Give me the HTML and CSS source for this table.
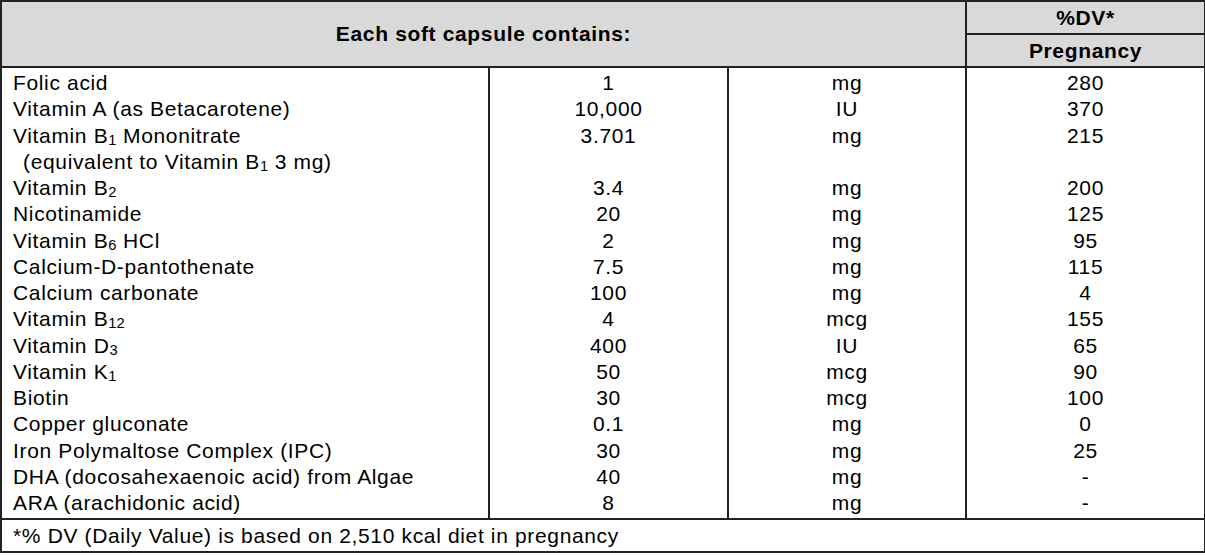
FILE: index.html
```html
<!DOCTYPE html>
<html>
<head>
<meta charset="utf-8">
<link rel="stylesheet" href="styles.css">
</head>
<body>
<table class="facts">
  <colgroup>
    <col class="c-name">
    <col class="c-amt">
    <col class="c-unit">
    <col class="c-dv">
  </colgroup>
  <thead>
    <tr class="hrow1">
      <th colspan="3" rowspan="2" class="h-main">Each soft capsule contains:</th>
      <th class="h-dv">%DV*</th>
    </tr>
    <tr class="hrow2">
      <th class="h-preg">Pregnancy</th>
    </tr>
  </thead>
  <tbody>
    <tr class="first">
      <td class="name">Folic acid</td>
      <td>1</td>
      <td>mg</td>
      <td>280</td>
    </tr>
    <tr>
      <td class="name">Vitamin A (as Betacarotene)</td>
      <td>10,000</td>
      <td>IU</td>
      <td>370</td>
    </tr>
    <tr>
      <td class="name">Vitamin B<span class="sub">1</span> Mononitrate<br><span class="indent">(equivalent to Vitamin B<span class="sub">1</span> 3 mg)</span></td>
      <td>3.701</td>
      <td>mg</td>
      <td>215</td>
    </tr>
    <tr>
      <td class="name">Vitamin B<span class="sub">2</span></td>
      <td>3.4</td>
      <td>mg</td>
      <td>200</td>
    </tr>
    <tr>
      <td class="name">Nicotinamide</td>
      <td>20</td>
      <td>mg</td>
      <td>125</td>
    </tr>
    <tr>
      <td class="name">Vitamin B<span class="sub">6</span> HCl</td>
      <td>2</td>
      <td>mg</td>
      <td>95</td>
    </tr>
    <tr>
      <td class="name">Calcium-D-pantothenate</td>
      <td>7.5</td>
      <td>mg</td>
      <td>115</td>
    </tr>
    <tr>
      <td class="name">Calcium carbonate</td>
      <td>100</td>
      <td>mg</td>
      <td>4</td>
    </tr>
    <tr>
      <td class="name">Vitamin B<span class="sub">12</span></td>
      <td>4</td>
      <td>mcg</td>
      <td>155</td>
    </tr>
    <tr>
      <td class="name">Vitamin D<span class="sub">3</span></td>
      <td>400</td>
      <td>IU</td>
      <td>65</td>
    </tr>
    <tr>
      <td class="name">Vitamin K<span class="sub">1</span></td>
      <td>50</td>
      <td>mcg</td>
      <td>90</td>
    </tr>
    <tr>
      <td class="name">Biotin</td>
      <td>30</td>
      <td>mcg</td>
      <td>100</td>
    </tr>
    <tr>
      <td class="name">Copper gluconate</td>
      <td>0.1</td>
      <td>mg</td>
      <td>0</td>
    </tr>
    <tr>
      <td class="name">Iron Polymaltose Complex (IPC)</td>
      <td>30</td>
      <td>mg</td>
      <td>25</td>
    </tr>
    <tr>
      <td class="name">DHA (docosahexaenoic acid) from Algae</td>
      <td>40</td>
      <td>mg</td>
      <td>-</td>
    </tr>
    <tr class="last">
      <td class="name">ARA (arachidonic acid)</td>
      <td>8</td>
      <td>mg</td>
      <td>-</td>
    </tr>
  </tbody>
  <tfoot>
    <tr>
      <td colspan="4" class="note">*% DV (Daily Value) is based on 2,510 kcal diet in pregnancy</td>
    </tr>
  </tfoot>
</table>
</body>
</html>
```

FILE: styles.css
```css
html, body {
  margin: 0;
  padding: 0;
  background: #ffffff;
}

.facts {
  border-collapse: collapse;
  width: 1204px;
  table-layout: fixed;
  font-family: "Liberation Sans", Arial, Helvetica, sans-serif;
  font-size: 21px;
  letter-spacing: 0.65px;
  color: #000;
}

.c-name { width: 488px; }
.c-amt { width: 239px; }
.c-unit { width: 238px; }
.c-dv { width: 239px; }

.facts th {
  background: #d9d9d9;
  font-weight: bold;
  border: 2px solid #222;
  padding: 0;
  text-align: center;
}

.hrow1 th.h-dv { height: 31px; line-height: 31px; }
.hrow2 th.h-preg { height: 31px; line-height: 31px; }

.facts tbody td {
  border-left: 2px solid #222;
  border-right: 2px solid #222;
  padding: 0;
  line-height: 26.25px;
  text-align: center;
  vertical-align: top;
}

.facts tbody tr.first td { padding-top: 2px; }
.facts tbody tr.last td { padding-bottom: 2px; }

.facts td.name {
  text-align: left;
  padding-left: 11px;
}

.indent {
  padding-left: 10px;
}

.sub {
  font-size: 0.7em;
  vertical-align: -0.12em;
  line-height: 0;
  letter-spacing: 0;
}

.facts td.note {
  border: 2px solid #222;
  text-align: left;
  padding: 0 0 0 11px;
  height: 31px;
  line-height: 31px;
}
```
